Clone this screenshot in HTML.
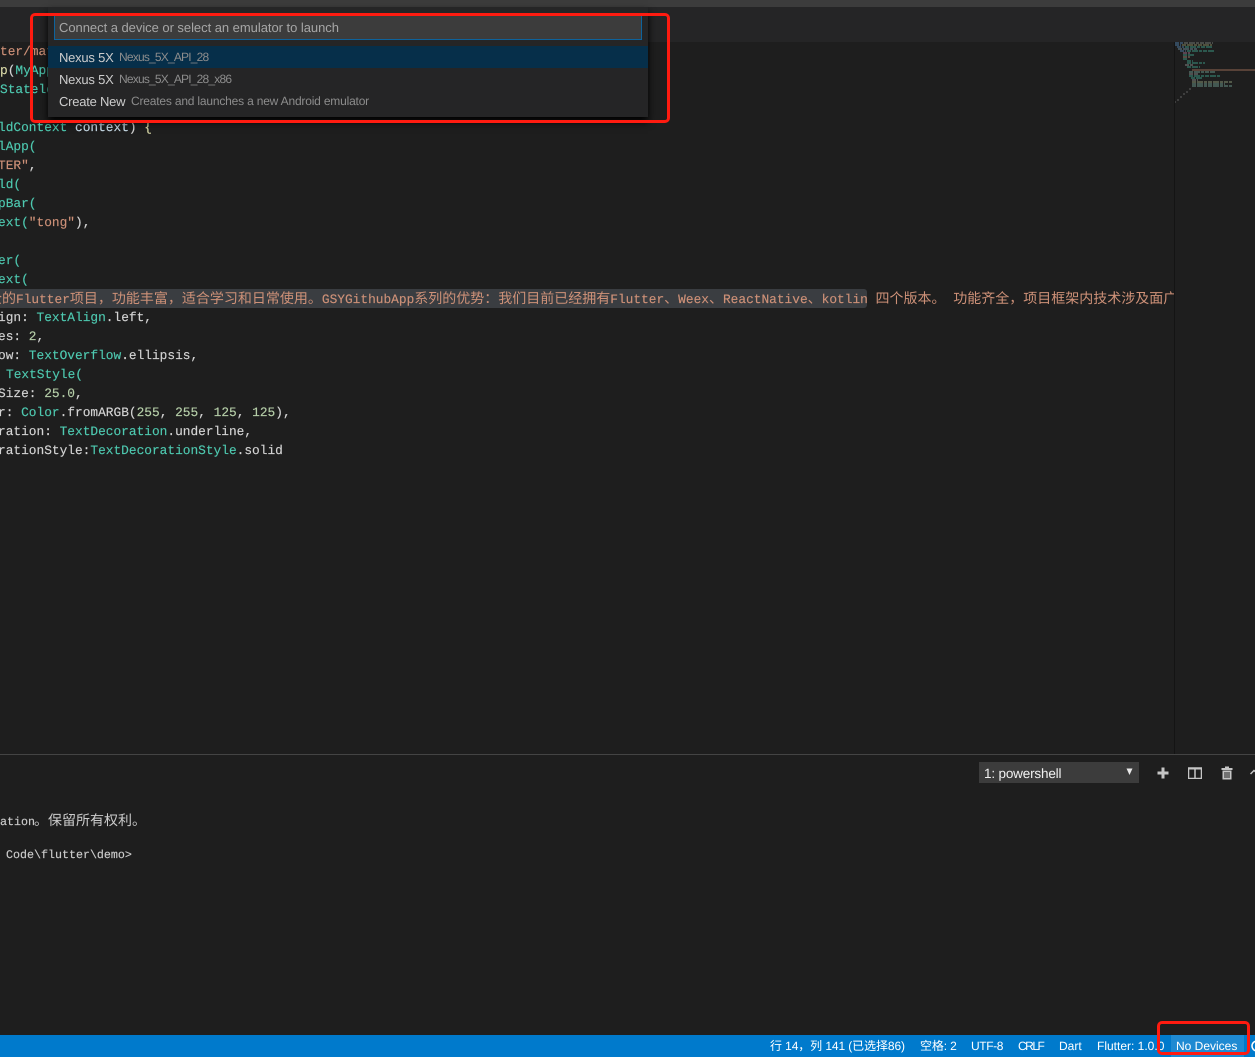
<!DOCTYPE html>
<html lang="zh">
<head>
<meta charset="utf-8">
<title>VS Code</title>
<style>
html,body{margin:0;padding:0;background:#1e1e1e;}
#app{position:relative;width:1255px;height:1057px;overflow:hidden;background:#1e1e1e;text-rendering:geometricPrecision;}
.abs{position:absolute;}
.l{position:absolute;white-space:pre;font:12.83px/19px "Liberation Mono","Noto Sans CJK SC",monospace;color:#d4d4d4;height:19px;-webkit-text-stroke:.15px currentColor;}
.z{font-family:"Noto Sans CJK SC","Liberation Sans",sans-serif;font-size:14px;-webkit-text-stroke:0;}
.t{color:#4ec9b0}.s{color:#ce9178}.n{color:#b5cea8}.f{color:#dcdcaa}.v{color:#c8dce8}
.term{font-size:11.67px;}
.ui{font-family:"Liberation Sans","Noto Sans CJK SC",sans-serif;white-space:pre;position:absolute;}
.st{font-size:12px;line-height:22px;top:1035px;color:#fff;}
.row{position:absolute;left:48px;width:600px;height:22px;}
.a{position:absolute;left:11px;font:13px/23px "Liberation Sans",sans-serif;color:#cccccc;white-space:pre;letter-spacing:-.23px;}
.b{position:absolute;font:12px/23px "Liberation Sans",sans-serif;color:#8c8c8c;white-space:pre;}
.red{position:absolute;border:3px solid #ff1b10;border-radius:5px;box-sizing:border-box;}
</style>
</head>
<body>
<div id="app">
  <div class="abs" style="left:0;top:0;width:1255px;height:7px;background:#3c3c3c"></div>
  <div class="abs" style="left:0;top:7px;width:1255px;height:35px;background:#252526"></div>

  <div class="abs" style="left:0;top:289px;width:867px;height:19px;background:#3a3d41;border-radius:0 3px 3px 0"></div>

  <div class="l s" style="left:0;top:42px">ter/material.dart</div>
  <div class="l" style="left:0;top:61px"><span class="f">p</span>(<span class="t">MyApp</span></div>
  <div class="l t" style="left:0;top:80px">Stateless</div>
  <div class="l" style="left:-2px;top:118px"><span class="t">ldContext</span> <span class="v">context</span>) <span class="f">{</span></div>
  <div class="l t" style="left:-2px;top:137px">lApp(</div>
  <div class="l" style="left:-2px;top:156px"><span class="s">TER"</span>,</div>
  <div class="l t" style="left:-2px;top:175px">ld(</div>
  <div class="l t" style="left:-2px;top:194px">pBar(</div>
  <div class="l" style="left:-2px;top:213px"><span class="t">ext(</span><span class="s">"tong"</span>),</div>
  <div class="l t" style="left:-2px;top:251px">er(</div>
  <div class="l t" style="left:-2px;top:270px">ext(</div>
  <div class="abs" style="left:0;top:289px;width:1174px;height:19px;overflow:hidden">
    <div class="l s" style="left:-12px;top:0"><span class="z">全的</span>Flutter<span class="z">项目，功能丰富，适合学习和日常使用。</span>GSYGithubApp<span class="z">系列的优势：我们目前已经拥有</span>Flutter<span class="z">、</span>Weex<span class="z">、</span>ReactNative<span class="z">、</span>kotlin <span class="z">四个版本。</span> <span class="z">功能齐全，项目框架内技术涉及面广泛</span></div>
  </div>
  <div class="l" style="left:-2px;top:308px">ign: <span class="t">TextAlign</span>.left,</div>
  <div class="l" style="left:-2px;top:327px">es: <span class="n">2</span>,</div>
  <div class="l" style="left:-2px;top:346px">ow: <span class="t">TextOverflow</span>.ellipsis,</div>
  <div class="l t" style="left:6px;top:365px">TextStyle(</div>
  <div class="l" style="left:-2px;top:384px">Size: <span class="n">25.0</span>,</div>
  <div class="l" style="left:-2px;top:403px">r: <span class="t">Color</span>.fromARGB(<span class="n">255</span>, <span class="n">255</span>, <span class="n">125</span>, <span class="n">125</span>),</div>
  <div class="l" style="left:-2px;top:422px">ration: <span class="t">TextDecoration</span>.underline,</div>
  <div class="l" style="left:-2px;top:441px">rationStyle:<span class="t">TextDecorationStyle</span>.solid</div>

  <div class="abs" style="left:1174px;top:42px;width:1px;height:712px;background:#141414"></div>
  <div class="abs" style="left:1175px;top:42px;width:80px;height:712px;background:#1e1e1e"></div>
  <svg class="abs" style="left:1175px;top:42px" width="80" height="62" viewBox="0 0 80 62">
    <g fill="none" stroke-width="1.500" stroke-dasharray="4 1 6 1 3 1" opacity=".62">
      <path d="M0 1H8" stroke="#4f7fa8"/><path d="M9 1H38" stroke="#7a8078"/>
      <path d="M0 3H6" stroke="#4f7fa8"/><path d="M7 3H37" stroke="#8a8a60"/>
      <path d="M2 5H9" stroke="#4f7fa8"/><path d="M10 5H37" stroke="#3f9d88"/>
      <path d="M3 7H22" stroke="#6f8a96"/>
      <path d="M5 9H11" stroke="#4f7fa8"/><path d="M12 9H40" stroke="#3f9d88"/>
      <path d="M8 11H15" stroke="#a0708f"/>
      <path d="M8 13H20" stroke="#3f9d88"/>
      <path d="M8 15H15" stroke="#a08070"/>
      <path d="M8 17H13" stroke="#3f9d88"/>
      <path d="M12 19H18" stroke="#3f9d88"/>
      <path d="M12 21H30" stroke="#3f9d88"/>
      <path d="M10 23H18" stroke="#8a8a8a"/>
      <path d="M12 25H25" stroke="#3f9d88"/>
      <path d="M17 28H80" stroke="#b07a60" stroke-dasharray="none" opacity=".85"/>
      <path d="M14 30H40" stroke="#6f9a8e"/>
      <path d="M14 32H23" stroke="#8a8a8a"/>
      <path d="M14 34H45" stroke="#3f9d88"/>
      <path d="M16 36H27" stroke="#3f9d88"/>
      <path d="M17 38H23" stroke="#8a8a8a"/>
      <path d="M17 40H57" stroke="#8f9a78"/>
      <path d="M17 42H50" stroke="#6f9a8e"/>
      <path d="M17 44H57" stroke="#6f9a8e"/>
    </g>
    <g fill="#3e3e3e">
      <rect x="14" y="46" width="2" height="2"/><rect x="11" y="49" width="2" height="2"/>
      <rect x="8" y="51" width="2" height="2"/><rect x="5" y="54" width="2" height="2"/>
      <rect x="2" y="57" width="2" height="2"/><rect x="0" y="59" width="1" height="2"/>
    </g>
  </svg>

  <!-- Quick pick -->
  <div class="abs" style="left:48px;top:7px;width:600px;height:110px;background:#252526;box-shadow:0 5px 8px #000"></div>
  <div class="abs" style="left:54px;top:15px;width:588px;height:25px;box-sizing:border-box;background:#3c3c3c;border:1px solid #0e639c;border-top:0"></div>
  <div class="ui" style="left:59px;top:15px;font-size:13px;line-height:25px;color:#a6a6a6;letter-spacing:-.04px">Connect a device or select an emulator to launch</div>
  <div class="row" style="top:46px;background:#062f4a"><span class="a">Nexus 5X</span><span class="b" style="left:71px;letter-spacing:-.8px">Nexus_5X_API_28</span></div>
  <div class="row" style="top:68px"><span class="a">Nexus 5X</span><span class="b" style="left:71px;letter-spacing:-.8px">Nexus_5X_API_28_x86</span></div>
  <div class="row" style="top:90px"><span class="a">Create New</span><span class="b" style="left:83px;letter-spacing:-.19px">Creates and launches a new Android emulator</span></div>

  <!-- Panel -->
  <div class="abs" style="left:0;top:754px;width:1255px;height:1px;background:#444"></div>
  <div class="abs" style="left:979px;top:762px;width:160px;height:21px;background:#3c3c3c"></div>
  <div class="ui" style="left:984px;top:763px;font-size:13.5px;line-height:22px;color:#f0f0f0;letter-spacing:-.17px">1: powershell</div>
  <svg class="abs" style="left:1126px;top:768px" width="7" height="8"><path d="M0.500 0.500H6.500L3.500 7Z" fill="#e8e8e8"/></svg>
  <svg class="abs" style="left:1157px;top:767px" width="12" height="12"><path d="M4.500 0.500H7.500V4.500H11.500V7.500H7.500V11.500H4.500V7.500H0.500V4.500H4.500Z" fill="#c5c5c5"/></svg>
  <svg class="abs" style="left:1188px;top:767px" width="14" height="12"><path d="M0.500 1H13.500V11.500H0.500ZM7 1V11.500" fill="none" stroke="#c5c5c5" stroke-width="1.500"/><path d="M0 0.500H14V2.500H0Z" fill="#c5c5c5"/></svg>
  <svg class="abs" style="left:1221px;top:766px" width="12" height="14"><path d="M4 0.500H8V2H11.500V4H0.500V2H4ZM1.500 4.500H10.500V13.500H1.500Z" fill="#c5c5c5"/><path d="M4 6V12M6 6V12M8 6V12" stroke="#1e1e1e" stroke-width="1"/></svg>
  <svg class="abs" style="left:1250px;top:768px" width="5" height="8"><path d="M0.500 6L4 2.500L7 5" fill="none" stroke="#c5c5c5" stroke-width="1.500"/></svg>

  <div class="l term" style="left:0;top:811px;color:#cccccc">ation<span class="z" style="margin-left:-1px">。保留所有权利。</span></div>
  <div class="l term" style="left:6px;top:846px;color:#cccccc">Code\flutter\demo&gt;</div>

  <!-- Status bar -->
  <div class="abs" style="left:0;top:1035px;width:1255px;height:22px;background:#007acc"></div>
  <div class="abs" style="left:1171px;top:1035px;width:73px;height:22px;background:#1f8ad2"></div>
  <div class="ui st" style="left:770px;letter-spacing:-.1px">行 14，列 141 (已选择86)</div>
  <div class="ui st" style="left:920px;letter-spacing:-.15px">空格: 2</div>
  <div class="ui st" style="left:971px;letter-spacing:-.4px">UTF-8</div>
  <div class="ui st" style="left:1018px;letter-spacing:-1.5px">CRLF</div>
  <div class="ui st" style="left:1059px">Dart</div>
  <div class="ui st" style="left:1097px">Flutter: 1.0.0</div>
  <div class="ui st" style="left:1176px">No Devices</div>
  <svg class="abs" style="left:1251px;top:1040px" width="4" height="12"><circle cx="6" cy="6" r="5" fill="none" stroke="#fff" stroke-width="1.500"/></svg>

  <!-- Annotations -->
  <div class="red" style="left:30px;top:13px;width:640px;height:110px"></div>
  <div class="red" style="left:1157px;top:1021px;width:93px;height:34px"></div>
</div>
</body>
</html>
